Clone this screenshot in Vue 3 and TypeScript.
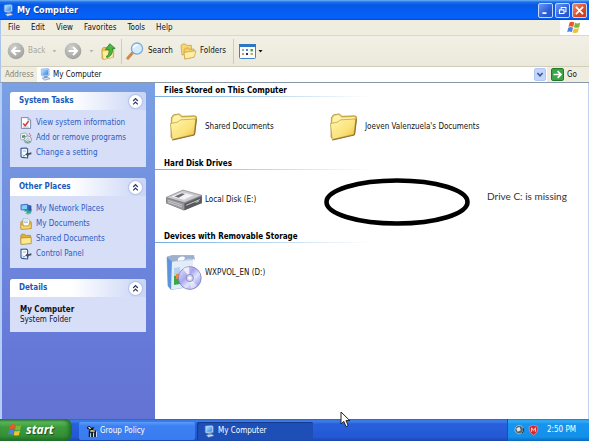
<script setup lang="ts">
import { ref } from 'vue'

interface Entry {
  icon: string
  label: string
}
interface Group {
  title: string
  items: Entry[]
}
interface Panel {
  title: string
  links: Entry[]
}

const menus: string[] = ['File', 'Edit', 'View', 'Favorites', 'Tools', 'Help']

const panels: Panel[] = [
  {
    title: 'System Tasks',
    links: [
      { icon: 'info', label: 'View system information' },
      { icon: 'programs', label: 'Add or remove programs' },
      { icon: 'setting', label: 'Change a setting' },
    ],
  },
  {
    title: 'Other Places',
    links: [
      { icon: 'network', label: 'My Network Places' },
      { icon: 'mydocs', label: 'My Documents' },
      { icon: 'shared', label: 'Shared Documents' },
      { icon: 'setting', label: 'Control Panel' },
    ],
  },
]

const groups: Group[] = [
  {
    title: 'Files Stored on This Computer',
    items: [
      { icon: 'folder', label: 'Shared Documents' },
      { icon: 'folder', label: "Joeven Valenzuela's Documents" },
    ],
  },
  { title: 'Hard Disk Drives', items: [{ icon: 'drive', label: 'Local Disk (E:)' }] },
  { title: 'Devices with Removable Storage', items: [{ icon: 'disc', label: 'WXPVOL_EN (D:)' }] },
]

const address = ref('My Computer')
</script>

<template>
  <div class="desktop">
    <svg class="sprite" width="0" height="0" aria-hidden="true">
      <defs>
        <linearGradient id="gFolder" x1="0" y1="0" x2="1" y2="1">
          <stop offset="0" stop-color="#fff7b0" />
          <stop offset="0.6" stop-color="#fbe27a" />
          <stop offset="1" stop-color="#e8b93c" />
        </linearGradient>
        <radialGradient id="gGray" cx="0.4" cy="0.3" r="0.8">
          <stop offset="0" stop-color="#d0d0cc" />
          <stop offset="1" stop-color="#9a9a96" />
        </radialGradient>
        <linearGradient id="gDisc" x1="0" y1="0" x2="1" y2="1">
          <stop offset="0" stop-color="#eef0ff" />
          <stop offset="0.4" stop-color="#a9a6ec" />
          <stop offset="0.6" stop-color="#dfe4ff" />
          <stop offset="1" stop-color="#7a78d4" />
        </linearGradient>
        <linearGradient id="gScreen" x1="0" y1="0" x2="1" y2="1">
          <stop offset="0" stop-color="#b4e0ff" />
          <stop offset="1" stop-color="#2a80e4" />
        </linearGradient>
      </defs>

      <symbol id="i-computer" viewBox="0 0 12 14">
        <path d="M1.4 1 L8.4 0.4 L10 1.3 V8 L3 9 L1.4 8 Z" fill="#b4d2f4" stroke="#6f9cd8" stroke-width=".5" />
        <path d="M2.6 2 L8.8 1.6 V7 L2.6 7.8 Z" fill="url(#gScreen)" />
        <path d="M4.5 9 L8 8.4 L8.6 10.4 L4.2 10.8 Z" fill="#7f94bc" />
        <path d="M2.4 11 L8.6 10 L11 11.6 L5 13.2 Z" fill="#d4e2f4" stroke="#5d7ab4" stroke-width=".6" />
      </symbol>

      <symbol id="i-flag" viewBox="0 0 16 14">
        <path d="M2.8 1.4 C4.4 .4 6 .5 7.8 1.6 L6.6 6.4 C5 5.4 3.2 5.4 1.5 6.2 Z" fill="#e8582a" />
        <path d="M8.6 2 C10.4 3 12.2 2.8 14.2 1.8 L13 6.6 C11.2 7.6 9.2 7.6 7.4 6.8 Z" fill="#7cb83c" />
        <path d="M1.3 7.2 C3 6.3 4.8 6.3 6.4 7.3 L5.2 12 C3.6 11 1.8 11 .1 12 Z" fill="#4a84e0" />
        <path d="M7.2 7.7 C9 8.6 11 8.5 12.8 7.5 L11.6 12.2 C9.8 13.2 7.8 13.2 6 12.4 Z" fill="#f6c22c" />
      </symbol>

      <symbol id="i-folder" viewBox="0 0 32 32">
        <path d="M3 7 L5 4 L11 3 L14 5.5 L27 5 Q29.5 5.2 29 8 L27 24 L5 29.4 L2.6 27 Z" fill="#e9c656" stroke="#a98a34" stroke-width=".8" />
        <path d="M4 8 L6 5 L10.6 4.2 L13.6 7 L27 6.3 L26.5 12 L4 14 Z" fill="#fff3a6" />
        <path d="M2 13 L10 11.3 L12 9.2 L28 8.2 L26.4 24.2 L3.8 29.4 Z" fill="url(#gFolder)" stroke="#b6953c" stroke-width=".7" />
        <path d="M4 30 L26.8 24.8 L28.8 8.4" fill="none" stroke="#8a7030" stroke-width="1" />
      </symbol>

      <symbol id="i-drive" viewBox="0 0 34 22">
        <path d="M0 9 L16 2 L34 7 V14 L17 21 L0 14 Z" fill="#77777b" />
        <path d="M0 8.6 L16 1.6 L34 6.6 L17.4 13.6 Z" fill="#c9c9ce" stroke="#808086" stroke-width=".6" />
        <path d="M5 8 L15 3.8 L26 6.6 L17 10.8 Z" fill="#f3f3f6" />
        <path d="M8 7.6 L15 4.6 L18 5.4 L12 8.8 Z" fill="#6d6d75" />
        <path d="M0.5 9.4 L17 14.4 V20.4 L0.5 14 Z" fill="#98989e" />
        <path d="M17.8 14.6 L33.6 8 V13.6 L17.8 20.4 Z" fill="#57575c" />
        <path d="M2 11.4 L15 15.6 M2 13 L15 17.4" stroke="#d8d8dc" stroke-width=".7" />
        <path d="M19 16 L32 10.6" stroke="#d0d0d4" stroke-width=".9" />
        <path d="M28 13.4 L31 12.2" stroke="#a4d494" stroke-width="1" />
      </symbol>

      <symbol id="i-disc" viewBox="0 0 36 36">
        <path d="M1 2 L6 .6 L28 .6 L26 5 L27 31 L5 34.6 L2 31 Z" fill="#b8cdea" stroke="#7f9cc8" stroke-width=".6" />
        <path d="M1 2 L6 6 L5 34.6 L2 31 Z" fill="#5b94dc" />
        <path d="M6 7 L27 5 L27 31 L5.4 34.4 Z" fill="#e3edf8" />
        <path d="M1 2 L6 .6 L28 .6 L29 4.6 L24 3.6 L6 6.6 Z" fill="#9fb0cc" />
        <path d="M12 3.4 Q15 .4 19 2.2 L18 5 L12 5.8 Z" fill="#fff" />
        <path d="M8 13 L14 12 V20 L8 21 Z" fill="#b4d0f2" />
        <path d="M8 21 L14 20 V29 L8 30 Z" fill="#38a848" />
        <path d="M10 19 L14 18.6 V23 L10 24 Z" fill="#f08a38" />
        <circle cx="23.8" cy="23" r="11.4" fill="url(#gDisc)" stroke="#7673b8" stroke-width=".7" />
        <path d="M23.8 23 L17 13.8 A11 11 0 0 1 23 11.9 Z" fill="#fff" opacity=".7" />
        <path d="M23.8 23 L31 30.4 A11 11 0 0 1 25 33.8 Z" fill="#fff" opacity=".5" />
        <circle cx="23.8" cy="23" r="3.6" fill="#d4d6f4" stroke="#7c7ab4" stroke-width=".8" />
        <circle cx="23.8" cy="23" r="1.6" fill="#fff" />
      </symbol>

      <symbol id="i-info" viewBox="0 0 12 12">
        <path d="M1.4 .6 H8 L10.6 3 V11.4 H1.4 Z" fill="#fff" stroke="#6e7f9c" stroke-width=".9" />
        <path d="M8 .6 V3 H10.6" fill="#b9c8e0" stroke="#6e7f9c" stroke-width=".6" />
        <path d="M3.2 6.4 L5.2 8.8 L8.6 4" fill="none" stroke="#d83a3a" stroke-width="1.5" />
        <path d="M3 10 H9" stroke="#8fa4cc" stroke-width=".7" />
      </symbol>
      <symbol id="i-programs" viewBox="0 0 12 12">
        <path d="M.6 2 L5 .8 L7 2 V7 L2 8 L.6 7 Z" fill="#f0f2f4" stroke="#8b98ac" stroke-width=".7" />
        <path d="M2 3.4 L5 2.8 V5.6 L2 6 Z" fill="#4e9e5e" />
        <circle cx="7.8" cy="7.6" r="3.7" fill="#dfe8f0" stroke="#6f8090" stroke-width=".7" />
        <path d="M5.4 8.6 A2.6 2.6 0 0 0 10 9" fill="none" stroke="#38a050" stroke-width="1.1" />
        <path d="M9 1 L11 4" stroke="#e0705a" stroke-width="1" />
        <circle cx="7.8" cy="7.6" r="1" fill="#fff" stroke="#7080a0" stroke-width=".5" />
      </symbol>
      <symbol id="i-setting" viewBox="0 0 12 12">
        <path d="M1 1.4 L6.4 1 L7.6 2 V11 L2 10.4 L1 9.4 Z" fill="#f4f8fd" stroke="#34598c" stroke-width="1.1" />
        <path d="M2.6 8 L4 9.4 L5.6 7.4" fill="none" stroke="#3c78c0" stroke-width=".8" />
        <path d="M3 4 H6" stroke="#90a8cc" stroke-width=".8" />
        <path d="M5.4 7.4 L8 4.6 V6.2 L11.4 5.2 V7.2 L8.4 8 V9.6 Z" fill="#3d5068" />
      </symbol>
      <symbol id="i-network" viewBox="0 0 12 12">
        <circle cx="8" cy="7.6" r="3.6" fill="#3aa0a0" />
        <path d="M6 10 Q8 11.8 10.6 10" stroke="#7ccf60" stroke-width="1.4" fill="none" />
        <path d="M.6 1.6 L7 .8 L8.4 1.6 V6.8 L2 7.6 L.6 6.8 Z" fill="#3f6fc4" />
        <path d="M1.6 2.4 L7 1.8 V6 L1.6 6.6 Z" fill="#7fd0f6" />
        <path d="M8 2 L11.4 2.6 V7.6 L8.6 8 Z" fill="#2c58b0" />
        <path d="M3 9 L7 8.4 L6 10 L3.6 10.2 Z" fill="#dce6f4" />
      </symbol>
      <symbol id="i-mydocs" viewBox="0 0 12 12">
        <path d="M.8 4 L2.6 2.8 H10 L11.2 4 V10.4 L1 11.2 Z" fill="#e8bc3c" stroke="#a48020" stroke-width=".6" />
        <path d="M3 .8 H8 L9.4 2.2 V8 H3 Z" fill="#fff" stroke="#8b98ac" stroke-width=".6" />
        <path d="M4 3 H8 M4 4.6 H8" stroke="#88a4d4" stroke-width=".7" />
        <path d="M.8 6.4 L3 6.2 V8 H9 V6 L11.2 5.8 V10.6 L1 11.4 Z" fill="#f8da68" stroke="#b08c28" stroke-width=".6" />
      </symbol>
      <symbol id="i-shared" viewBox="0 0 12 12">
        <path d="M.8 2.4 L1.8 1.2 H4.6 L5.6 2.4 H10.6 V10 L1 11 Z" fill="#e2b030" stroke="#9c7820" stroke-width=".6" />
        <path d="M.7 5 L11.2 4.4 V10.6 L1 11.4 Z" fill="#fdea88" stroke="#a8842c" stroke-width=".7" />
      </symbol>
      <symbol id="i-policy" viewBox="0 0 12 12">
        <path d="M1 1 L4 0 L6 2 L9 1 L7.6 4 L11 5 V12 H9 V7 H7.6 V12 H5.6 V7 L4.6 7.4 V12 H3 V6 L4 4 L1.4 3.4 Z" fill="#15181c" />
        <path d="M2 1.6 L4.2 1 L5.6 3 L4 3.4 Z" fill="#f4f0d8" />
        <path d="M5 4.4 L9.6 5 V6.4 H4.6 Z" fill="#e8d890" />
        <path d="M8.2 7.4 V12 M5 8 V12 M11.4 6 V12" stroke="#fff" stroke-width=".8" />
      </symbol>
    </svg>

    <div class="window">
      <header class="titlebar">
        <svg class="ico-title"><use href="#i-computer" /></svg>
        <h1>My Computer</h1>
        <div class="caption">
          <button class="cap" type="button" aria-label="Minimize">
            <svg viewBox="0 0 15 15"><path d="M4 10.5 H8.6" stroke="#fff" stroke-width="2" /></svg>
          </button>
          <button class="cap" type="button" aria-label="Restore">
            <svg viewBox="0 0 15 15">
              <path d="M6 6 V4 H11.5 V9 H9.5" fill="none" stroke="#fff" stroke-width="1.2" />
              <path d="M4 6.8 H9.2 V11 H4 Z" fill="none" stroke="#fff" stroke-width="1.2" />
            </svg>
          </button>
          <button class="cap close" type="button" aria-label="Close">
            <svg viewBox="0 0 15 15"><path d="M3.4 3.4 L11.6 11.6 M11.6 3.4 L3.4 11.6" stroke="#fff" stroke-width="2" /></svg>
          </button>
        </div>
      </header>

      <nav class="menubar">
        <button v-for="m in menus" :key="m" type="button">{{ m }}</button>
        <span class="throbber"><svg viewBox="0 0 16 14"><use href="#i-flag" /></svg></span>
      </nav>

      <div class="toolbar">
        <button class="tool back" type="button" disabled>
          <svg class="round" viewBox="0 0 18 18">
            <circle cx="9" cy="9" r="8.3" fill="url(#gGray)" />
            <path d="M13.4 9 H5.4 M9 5 L5 9 L9 13" fill="none" stroke="#fff" stroke-width="2" />
          </svg>
          <span>Back</span>
          <svg class="drop" viewBox="0 0 5 3"><path d="M.5 0 H4.5 L2.5 2.4 Z" fill="#b9b6aa" /></svg>
        </button>
        <button class="tool forward" type="button" disabled aria-label="Forward">
          <svg class="round" viewBox="0 0 18 18">
            <circle cx="9" cy="9" r="8.3" fill="url(#gGray)" />
            <path d="M4.6 9 H12.6 M9 5 L13 9 L9 13" fill="none" stroke="#fff" stroke-width="2" />
          </svg>
          <svg class="drop" viewBox="0 0 5 3"><path d="M.5 0 H4.5 L2.5 2.4 Z" fill="#b9b6aa" /></svg>
        </button>
        <button class="tool up" type="button" aria-label="Up">
          <svg class="ico-up" viewBox="0 0 15 17">
            <path d="M1 6 L2.4 4.4 L6 4.6 L7 6 L12.6 5.6 V14 L2 16.4 L1 15 Z" fill="#e8c555" stroke="#b3923a" stroke-width=".7" />
            <path d="M1.2 8 L12.8 7 L12 14.4 L2.2 16.4 Z" fill="#fcefa0" stroke="#c4a54c" stroke-width=".5" />
            <path d="M5 13.6 Q8.6 12.4 8 6.4 L4.4 6.6 L8.8 .8 L14.2 5.4 L11.4 5.8 Q12.4 12 6.2 14.6 Z" fill="#4cb840" stroke="#23802a" stroke-width=".8" />
          </svg>
        </button>
        <span class="sep"></span>
        <button class="tool search" type="button">
          <svg class="ico-search" viewBox="0 0 18 18">
            <path d="M6.4 11 L1.8 16.2" stroke="#d08a4c" stroke-width="3" stroke-linecap="round" />
            <circle cx="11" cy="6.6" r="5.6" fill="#d4ecfc" stroke="#7fa8d4" stroke-width="1.3" />
            <path d="M7.6 6 Q8.4 3 11.6 2.8" stroke="#fff" stroke-width="1.5" fill="none" />
          </svg>
          <span>Search</span>
        </button>
        <button class="tool folders" type="button">
          <svg class="ico-folders" viewBox="0 0 17 17">
            <path d="M1 2.6 L2.4 1 H5.4 L6.6 2.4 H11.4 V10 L2 12 Z" fill="#f6d778" stroke="#c49a38" stroke-width=".7" />
            <path d="M4 7 L5.4 5.2 L8.6 5 L9.6 6.4 L14 6 V14 L4.8 16 Z" fill="#f4cf64" stroke="#c49a38" stroke-width=".7" />
            <path d="M4 9.4 L16 7.8 L14.2 14.2 L4.8 16 Z" fill="#fdeea4" stroke="#caa044" stroke-width=".7" />
          </svg>
          <span>Folders</span>
        </button>
        <span class="sep"></span>
        <button class="tool views" type="button" aria-label="Views">
          <svg class="ico-views" viewBox="0 0 17 15">
            <rect x=".5" y=".5" width="16" height="14" rx="1" fill="#f8fbff" stroke="#3f82c8" />
            <rect x="0" y="0" width="17" height="3" fill="#2c76c4" />
            <rect x="3" y="5" width="2" height="2" fill="#8fa7cc" />
            <rect x="7" y="5" width="2" height="2" fill="#5a82d4" />
            <rect x="11.5" y="5" width="2.4" height="2.4" fill="#4aa04a" />
            <rect x="3" y="9" width="2" height="2" fill="#e08c60" />
            <rect x="7" y="9" width="2" height="2" fill="#28344c" />
            <rect x="11.5" y="9" width="2.4" height="2" fill="#b8b060" />
          </svg>
          <svg class="drop" viewBox="0 0 5 3"><path d="M.5 0 H4.5 L2.5 2.6 Z" fill="#111" /></svg>
        </button>
      </div>

      <form class="address" @submit.prevent>
        <label for="addr">Address</label>
        <div class="field">
          <svg class="ico-addr"><use href="#i-computer" /></svg>
          <select id="addr" v-model="address">
            <option>My Computer</option>
          </select>
          <svg class="arrow" viewBox="0 0 12 13">
            <rect x=".5" y=".5" width="11" height="12" rx="1.5" fill="#c4d5fb" stroke="#b0c6f4" />
            <path d="M3.4 5 L6 7.8 L8.6 5" fill="none" stroke="#3f5a90" stroke-width="1.7" />
          </svg>
        </div>
        <button class="go" type="submit">
          <svg viewBox="0 0 13 13">
            <rect x=".5" y=".5" width="12" height="12" rx="1.4" fill="#3ba444" stroke="#24782e" />
            <path d="M2.6 6.5 H9.6 M6.6 3.2 L10 6.5 L6.6 9.8" fill="none" stroke="#fff" stroke-width="1.7" />
          </svg>
          <span>Go</span>
        </button>
      </form>

      <div class="body">
        <aside class="side">
          <section v-for="p in panels" :key="p.title" class="panel">
            <div class="panel-head">
              <h2>{{ p.title }}</h2>
              <button class="chev" type="button" :aria-label="p.title">
                <svg viewBox="0 0 13 13">
                  <path d="M4.2 6 L6.5 3.6 L8.8 6 M4.2 9.4 L6.5 7 L8.8 9.4" fill="none" stroke="#26366c" stroke-width="1.2" />
                </svg>
              </button>
            </div>
            <ul>
              <li v-for="l in p.links" :key="l.label">
                <a href="#">
                  <svg><use :href="'#i-' + l.icon" /></svg>
                  <span>{{ l.label }}</span>
                </a>
              </li>
            </ul>
          </section>
          <section class="panel">
            <div class="panel-head">
              <h2>Details</h2>
              <button class="chev" type="button" aria-label="Details">
                <svg viewBox="0 0 13 13">
                  <path d="M4.2 6 L6.5 3.6 L8.8 6 M4.2 9.4 L6.5 7 L8.8 9.4" fill="none" stroke="#26366c" stroke-width="1.2" />
                </svg>
              </button>
            </div>
            <div class="details">
              <strong>My Computer</strong>
              <span>System Folder</span>
            </div>
          </section>
        </aside>

        <main class="files">
          <section v-for="g in groups" :key="g.title" class="group">
            <h2>{{ g.title }}</h2>
            <div class="items">
              <div v-for="i in g.items" :key="i.label" class="item">
                <svg :class="i.icon"><use :href="'#i-' + i.icon" /></svg>
                <span>{{ i.label }}</span>
              </div>
            </div>
          </section>
          <svg class="ring" viewBox="0 0 148 50">
            <ellipse cx="74" cy="25" rx="70.5" ry="21.5" fill="none" stroke="#000" stroke-width="4.6" />
          </svg>
          <p class="note">Drive C: is missing</p>
        </main>
      </div>
    </div>

    <footer class="taskbar">
      <button class="start" type="button">
        <svg viewBox="0 0 16 14"><use href="#i-flag" /></svg>
        <span>start</span>
      </button>
      <div class="tasks">
        <button class="task" type="button">
          <svg><use href="#i-policy" /></svg>
          <span>Group Policy</span>
        </button>
        <button class="task active" type="button">
          <svg><use href="#i-computer" /></svg>
          <span>My Computer</span>
        </button>
      </div>
      <div class="tray">
        <svg viewBox="0 0 12 12">
          <circle cx="5.6" cy="5.6" r="4.6" fill="#58626c" stroke="#c0ccd4" stroke-width=".8" />
          <path d="M2.4 4.4 L6 2.4 L7.4 6.4 L4 8 Z" fill="#dfe6ea" />
          <path d="M8.6 9.6 Q11.4 8 10.4 4" stroke="#20303c" stroke-width="1" fill="none" />
        </svg>
        <svg viewBox="0 0 12 12">
          <path d="M6 .6 L10.8 2.4 Q11 9 6 11.6 Q1 9 1.2 2.4 Z" fill="#d8242c" stroke="#f0a0a0" stroke-width=".7" />
          <path d="M4 3.4 V8 M8 3.4 V8 M4 4 L6 6.4 L8 4" stroke="#fff" stroke-width=".9" fill="none" />
        </svg>
        <time>2:50 PM</time>
      </div>
    </footer>

    <svg class="pointer" viewBox="0 0 11 17">
      <path d="M1 1 V13 L3.8 10.4 L6 15.6 L8.2 14.6 L6 9.6 H9.8 Z" fill="#fff" stroke="#222" stroke-width="1" />
    </svg>
  </div>
</template>

<style>
html,
body,
#app {
  height: 100%;
}
body {
  margin: 0;
}
</style>

<style scoped>
.desktop {
  position: relative;
  display: flex;
  flex-direction: column;
  min-height: 100%;
  overflow: hidden;
  color: #111;
  font: 8px/10px 'DejaVu Sans Condensed', 'DejaVu Sans', sans-serif;
}
.desktop * {
  box-sizing: border-box;
}
.sprite {
  position: absolute;
}
svg {
  display: block;
  flex: none;
}
button {
  display: flex;
  align-items: center;
  padding: 0;
  border: 0;
  background: none;
  color: inherit;
  font: inherit;
  white-space: nowrap;
}
h1,
h2,
p,
ul {
  margin: 0;
  padding: 0;
  list-style: none;
}
.window {
  display: flex;
  flex: 1;
  flex-direction: column;
  background: #efede0;
}

.titlebar {
  display: flex;
  align-items: center;
  height: 20px;
  padding: 0 2px 0 3px;
  gap: 3px;
  background: linear-gradient(#6fb2f6 0, #1c70ee 2px, #0458e4 5px, #0560f6 14px, #0461fa 18px, #0346d4 20px);
}
.ico-title {
  width: 11px;
  height: 13px;
}
h1 {
  flex: 1;
  color: #fff;
  font-size: 9px;
  line-height: 12px;
  text-shadow: 1px 1px 0 #0a3a9c;
}
.caption {
  display: flex;
  gap: 2px;
}
.cap {
  width: 15px;
  height: 15px;
  border: 1px solid #c4d6fa;
  border-radius: 2px;
  background: linear-gradient(135deg, #6d97f4, #2b5fdc 60%, #2452c8);
}
.cap svg {
  width: 13px;
  height: 13px;
}
.cap.close {
  background: linear-gradient(135deg, #ee8a6c, #dc4a28 60%, #c23a1c);
}

.menubar {
  display: flex;
  align-items: center;
  height: 16px;
  padding-left: 7px;
  gap: 11px;
  border-left: 1px solid #a8c4ec;
  border-bottom: 1px solid #dcd8c8;
}
.throbber {
  display: flex;
  align-items: center;
  align-self: stretch;
  justify-content: center;
  width: 29px;
  margin-left: auto;
  background: #fff;
}
.throbber svg {
  width: 15px;
  height: 13px;
}

.toolbar {
  display: flex;
  align-items: center;
  height: 31px;
  padding-left: 6px;
  border-left: 1px solid #a8c4ec;
  border-bottom: 1px solid #d0cdbd;
  background: linear-gradient(#f2f0e6, #ebe9da);
}
.round {
  width: 18px;
  height: 18px;
}
.drop {
  width: 5px;
  height: 3px;
}
.tool {
  gap: 4px;
}
.back {
  width: 57px;
  gap: 3px;
  color: #aaa79a;
}
.back .drop {
  margin-left: 4px;
}
.forward {
  width: 37px;
  gap: 7px;
}
.ico-up {
  width: 15px;
  height: 17px;
}
.up {
  width: 20px;
}
.sep {
  width: 1px;
  height: 25px;
  background: #cfccba;
}
.search {
  width: 58px;
  padding-left: 4px;
}
.ico-search {
  width: 18px;
  height: 18px;
}
.folders {
  width: 53px;
  gap: 3px;
}
.ico-folders {
  width: 17px;
  height: 17px;
}
.views {
  gap: 2px;
  padding-left: 5px;
}
.ico-views {
  width: 17px;
  height: 15px;
}

.address {
  display: flex;
  align-items: center;
  height: 16px;
  padding: 0 12px 0 4px;
  border-left: 1px solid #a8c4ec;
  border-bottom: 1px solid #8898a8;
}
.address label {
  width: 32px;
  color: #87857a;
}
.field {
  display: flex;
  flex: 1;
  align-items: center;
  height: 15px;
  padding: 0 1px 0 3px;
  background: #fff;
}
.ico-addr {
  width: 11px;
  height: 13px;
}
select {
  flex: 1;
  min-width: 0;
  height: 13px;
  padding: 0 2px;
  border: 0;
  background: none;
  color: inherit;
  font: inherit;
  appearance: none;
}
.arrow {
  width: 12px;
  height: 13px;
}
.go {
  gap: 3px;
  padding-left: 4px;
}
.go svg {
  width: 13px;
  height: 13px;
}

.body {
  display: flex;
  flex: 1;
}
.side {
  display: flex;
  flex: none;
  flex-direction: column;
  width: 155px;
  padding: 9px 9px 9px 8px;
  gap: 11px;
  border-left: 2px solid #b4cdf4;
  background: linear-gradient(#7ba0e4, #6578d8 80%, #6373d4);
}
.panel {
  overflow: hidden;
  border-radius: 3px 3px 0 0;
  background: #d7def8;
}
.panel-head {
  display: flex;
  align-items: center;
  justify-content: space-between;
  height: 18px;
  padding: 0 4px 0 9px;
  background: linear-gradient(90deg, #fff 45%, #c8d4f6);
}
.panel-head h2 {
  color: #2258b8;
  font-size: 8px;
  line-height: 12px;
}
.chev {
  width: 13px;
  height: 13px;
  border-radius: 50%;
  background: #fff;
  box-shadow: 0 0 1px 1px #b4c0e4;
}
.chev svg {
  width: 13px;
  height: 13px;
}
.panel ul {
  padding: 5px 10px 7px;
}
.panel a {
  display: flex;
  align-items: center;
  height: 15px;
  gap: 4px;
  color: #2c5cc0;
  text-decoration: none;
  white-space: nowrap;
}
.panel a svg {
  width: 12px;
  height: 12px;
}
.details {
  display: flex;
  flex-direction: column;
  padding: 8px 10px 7px;
}

.files {
  position: relative;
  flex: 1;
  min-width: 0;
  border-right: 1px solid #c4d4f0;
  background: #fff;
}
.group h2 {
  height: 14px;
  padding-left: 9px;
  border-bottom: 1px solid;
  border-image: linear-gradient(90deg, #74acdc, #b8d6ee 25%, #fff 50%) 1;
  color: #000;
  font-size: 8px;
  line-height: 16px;
}
.items {
  display: flex;
  height: 59px;
  padding-left: 11px;
}
.item {
  display: flex;
  align-items: center;
  width: 160px;
  gap: 3px;
  white-space: nowrap;
}
.item svg {
  width: 36px;
  height: 36px;
}
.item .folder {
  height: 31px;
}
.ring {
  position: absolute;
  top: 94px;
  left: 168px;
  width: 148px;
  height: 50px;
}
.note {
  position: absolute;
  top: 106px;
  left: 332px;
  color: #333;
  font: 10px/14px Lato, sans-serif;
  white-space: nowrap;
}

.taskbar {
  display: flex;
  height: 22px;
  color: #fff;
  background: linear-gradient(#2c62c4 0, #3d80ec 2px, #2860dc 5px, #2458d4 18px, #1c46ac);
}
.start {
  width: 72px;
  padding-left: 8px;
  gap: 3px;
  border-radius: 0 7px 7px 0;
  background: linear-gradient(#2f7a34 0, #5cb85a 3px, #3c9c3c 8px, #348f34 17px, #22702a);
  box-shadow: inset -3px 0 4px #1f6a28;
  font: italic bold 12px/16px 'Open Sans', sans-serif;
  text-shadow: 1px 1px 1px #1c5020;
}
.start svg {
  width: 15px;
  height: 14px;
}
.tasks {
  display: flex;
  flex: 1;
  align-items: center;
  gap: 2px;
  padding: 2px 0 0 7px;
}
.task {
  width: 116px;
  height: 18px;
  padding-left: 7px;
  gap: 3px;
  border-radius: 2px;
  background: linear-gradient(#5c9cfa, #3c80f2 4px, #3a7cf0);
}
.task svg {
  width: 11px;
  height: 13px;
}
.task.active {
  background: #1e4fb6;
  box-shadow: inset 1px 1px 1px #143a8c;
}
.tray {
  display: flex;
  align-items: center;
  width: 82px;
  padding-left: 6px;
  gap: 3px;
  border-left: 1px solid #1c50a8;
  background: linear-gradient(#2474d0 0, #34b0f6 2px, #1694ee 5px, #1290ea 18px, #0c68c0);
}
.tray svg {
  width: 11px;
  height: 12px;
}
.tray time {
  margin-left: 5px;
}
.pointer {
  position: absolute;
  top: 411px;
  left: 340px;
  width: 11px;
  height: 17px;
}
</style>
